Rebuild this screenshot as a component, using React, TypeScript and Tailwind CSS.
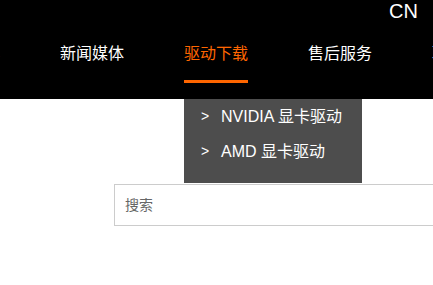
const navItems = ['产品中心', '新闻媒体', '驱动下载', '售后服务', '联系我们'];

const drivers = ['NVIDIA 显卡驱动', 'AMD 显卡驱动'];

export default function App() {
  return (
    <div className="w-[433px] h-[285px] overflow-hidden bg-white font-['Liberation_Sans','Noto_Sans_CJK_SC',sans-serif]">
      {/* Header */}
      <div className="h-[99px] bg-black flex flex-col">
        <div className="flex justify-end pr-[15px] h-[24px]">
          <span className="text-white text-[20px] leading-[22px]">CN</span>
        </div>
        <nav className="mt-[22px] ml-[-64px] flex gap-[60px] whitespace-nowrap">
          {navItems.map((item) => {
            const active = item === '驱动下载';
            return (
              <div key={item} className="relative flex flex-col w-[64px] shrink-0">
                <span className={`text-[16px] leading-[16px] ${active ? 'text-[#ff6600]' : 'text-white'}`}>
                  {item}
                </span>
                {active && (
                  <>
                    <div className="mt-[18px] h-[3px] w-full bg-[#ff6600]" />
                    {/* Dropdown */}
                    <div className="absolute left-0 top-[53px] z-10 w-[178px] h-[84px] bg-[#4d4d4d]">
                      {drivers.map((d) => (
                        <div key={d} className="flex items-center h-[35px] pl-[17px] text-white text-[16px]">
                          <span className="w-[20px] text-[14px]">&gt;</span>
                          <span>{d}</span>
                        </div>
                      ))}
                    </div>
                  </>
                )}
              </div>
            );
          })}
        </nav>
      </div>

      {/* Search */}
      <div className="mt-[85px] ml-[114px] w-[400px] h-[42px] border border-[#cccccc] flex items-center pl-[10px]">
        <input
          type="text"
          placeholder="搜索"
          className="w-full outline-none text-[14px] text-[#666] placeholder:text-[#666] bg-transparent"
        />
      </div>
    </div>
  );
}
